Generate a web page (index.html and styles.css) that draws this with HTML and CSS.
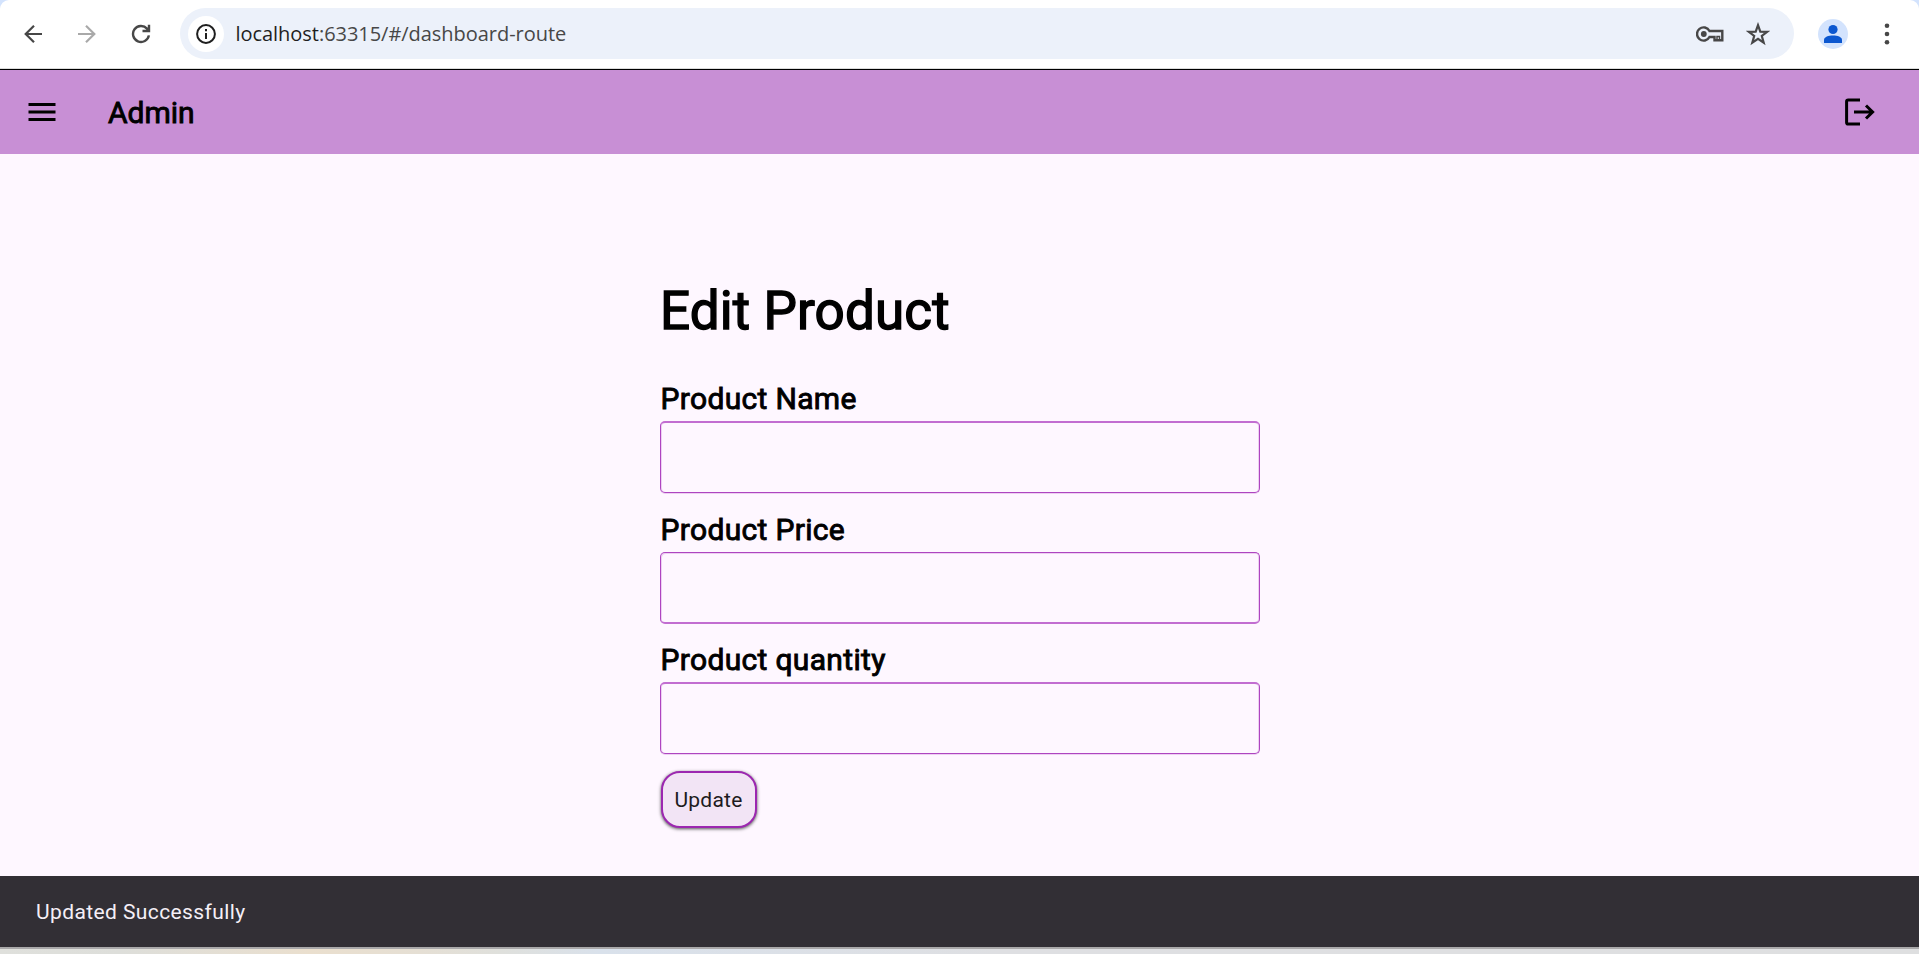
FILE: index.html
```html
<!DOCTYPE html>
<html lang="en">
<head>
<meta charset="utf-8">
<title>Admin</title>
<link rel="stylesheet" href="styles.css">
</head>
<body>
<div class="window">
  <header class="toolbar">
    <svg class="nav back" viewBox="0 0 20 20"><path d="M19 10H2.700M11 1.800 2.700 10 11 18.200"/></svg>
    <svg class="nav forward" viewBox="0 0 20 20"><path d="M1 10h16.300M9 1.800 17.300 10 9 18.200"/></svg>
    <svg class="nav reload" viewBox="0 0 20 20"><path d="M17.900 11.400A8 8 0 1 1 16 4.600L18 6.600M18 .8V7H11.500"/></svg>
    <div class="address">
      <span class="site-info">
        <svg viewBox="0 0 20 20"><circle cx="10" cy="10" r="8.900"/><path d="M10 9v6M10 5v2.200"/></svg>
      </span>
      <span class="url"><b>localhost</b>:63315/#/dashboard-route</span>
      <svg class="key" viewBox="0 0 28 16"><path d="M13.500 5A6.600 6.600 0 1 0 13.500 11H18.500V14.300H26.300V5Z"/><path class="teeth" d="M21 14v-3.500h2.500V14"/><circle cx="7.800" cy="8" r="2.900"/></svg>
      <svg class="star" viewBox="0 0 24 24"><path d="m12 3.200 2.300 6.400 6.900.2-5.400 4.200 1.900 6.700-5.700-3.800-5.700 3.800 1.900-6.700L2.800 9.800l6.900-.2Z"/></svg>
    </div>
    <span class="profile"><svg viewBox="0 0 18 18"><circle cx="9" cy="4.500" r="4.600"/><path d="M0 18v-3C0 12 4.500 10.600 9 10.600s9 1.400 9 4.400V18Z"/></svg></span>
    <svg class="more" viewBox="0 0 6 22"><circle cx="3" cy="2.700" r="2.300"/><circle cx="3" cy="11" r="2.300"/><circle cx="3" cy="19.300" r="2.300"/></svg>
  </header>
  <nav class="app-bar">
    <svg class="menu" viewBox="0 0 28 20"><path d="M.5 2.500h27M.5 10h27M.5 17.500h27"/></svg>
    <span class="app-title">Admin</span>
    <svg class="logout" viewBox="0 0 30 28"><path d="M15 1.900H3.200Q1.600 1.900 1.600 3.500v21Q1.600 26.100 3.200 26.100H15M9 14h19M21 7.500 27.600 14 21 20.500"/></svg>
  </nav>
  <main class="page">
    <form class="form">
      <h1 class="heading">Edit Product</h1>
      <label class="label" for="name">Product Name</label>
      <input class="field field-name" id="name">
      <label class="label" for="price">Product Price</label>
      <input class="field field-price" id="price">
      <label class="label" for="qty">Product quantity</label>
      <input class="field field-quantity" id="qty">
      <button class="update" type="button"><span>Update</span></button>
    </form>
  </main>
  <footer class="snackbar"><span>Updated Successfully</span></footer>
  <div class="desktop-edge"></div>
</div>
</body>
</html>
```
FILE: styles.css
```css
* { box-sizing: border-box; }
body { margin: 0; font-family: Roboto, sans-serif; background: #d3e3fd; }
.window { height: 954px; display: flex; flex-direction: column; overflow: hidden; }
svg { display: block; flex: none; fill: none; }

.toolbar { height: 70px; display: flex; align-items: center; padding: 0 28px 2px 23px; background: #fff; border-bottom: 1px solid #000; box-shadow: inset 0 -1px #dcdcdc; border-radius: 9px 9px 0 0; }
.nav { width: 20px; height: 20px; stroke: #474747; stroke-width: 2.2; }
.forward { margin-left: 34px; stroke: #a9a9a9; }
.reload { margin-left: 34px; stroke-width: 2.4; }
.address { width: 1614px; height: 51px; margin-left: 29px; padding: 0 24px 0 8px; display: flex; align-items: center; background: #ecf1fa; border-radius: 26px; }
.site-info { width: 36px; height: 36px; border-radius: 50%; background: #fff; display: grid; place-items: center; }
.site-info svg { width: 20px; height: 20px; stroke: #1f1f1f; stroke-width: 2; }
.url { flex: 1; margin-left: 11.5px; font: 20px/30px "Open Sans", "Noto Sans", sans-serif; letter-spacing: -.04px; color: #474747; }
.url b { font-weight: 400; color: #1f1f1f; }
.key { width: 28px; height: 16px; stroke: #474747; stroke-width: 2.4; }
.key circle { fill: #474747; stroke: none; }
.key .teeth { stroke-width: 1.5; }
.star { width: 24px; height: 24px; margin-left: 22px; stroke: #474747; stroke-width: 2.2; }
.profile { width: 30px; height: 30px; margin-left: 24px; border-radius: 50%; background: #d3e3fd; display: grid; place-items: center; }
.profile svg { width: 18px; height: 18px; fill: #0b57d0; overflow: visible; }
.more { width: 6px; height: 22px; margin-left: 36px; fill: #474747; }

.app-bar { height: 84px; padding: 0 44px 0 28px; display: flex; align-items: center; background: #c88fd5; }
.menu { width: 28px; height: 20px; stroke: #000; stroke-width: 3; }
.app-title { flex: 1; margin-left: 52px; padding-top: 2px; font-size: 30px; line-height: 36px; -webkit-text-stroke: .9px #000; }
.logout { width: 30px; height: 28px; stroke: #000; stroke-width: 3; }

.page { flex: 1; display: flex; justify-content: center; background: #fef7ff; }
.form { width: 600px; padding-top: 127px; display: flex; flex-direction: column; }
.heading { margin: 0 0 41px; padding-left: .5px; font-size: 53px; font-weight: 400; line-height: 60px; letter-spacing: .12px; -webkit-text-stroke: 1.4px #000; }
.label { height: 39px; padding-left: 1px; font-size: 30px; line-height: 34px; letter-spacing: .33px; -webkit-text-stroke: .9px #000; }
.field { width: 600px; height: 72px; margin: 0 0 19px; padding: 0 15px; background: transparent; border: 1px solid #ae45c0; border-radius: 5px; font: 20px Roboto, sans-serif; outline: 0; }
.field-name, .field-quantity { border-top: 2px solid #c26dd1; box-shadow: inset -1px 0 #edcff2, inset 1px 0 #edcff2, 0 1px #edcff2; }
.field-name { margin-bottom: 20px; }
.field-price { border-bottom: 2px solid #c26dd1; box-shadow: inset -1px 0 #edcff2, inset 1px 1px #edcff2; }
.field-quantity { margin-bottom: 17px; }
.update { width: 96px; height: 57px; margin-left: 1px; padding: 0; border: 2px solid #9c27b0; border-radius: 19px; background: #f2e4f5; box-shadow: 0 1px 3px 1px rgba(0,0,0,.3), 0 1px 2px rgba(0,0,0,.3); color: #1d1b20; font: 21px/24px Roboto, sans-serif; letter-spacing: .25px; }
.snackbar { height: 71px; padding: 1px 0 0 36px; display: flex; align-items: center; background: #322f35; color: #f5eff7; font-size: 21px; line-height: 28px; letter-spacing: .4px; }
.desktop-edge { height: 7px; border-top: 2px solid #aaa9aa; background: linear-gradient(90deg, #dfe0dc 0, #dddeda 120px, #eadfce 310px, #e5dfd4 420px, #dfe0dc 500px, #d9e1eb 600px, #dedfe2 1000px, #dedfe0 100%); }
```
